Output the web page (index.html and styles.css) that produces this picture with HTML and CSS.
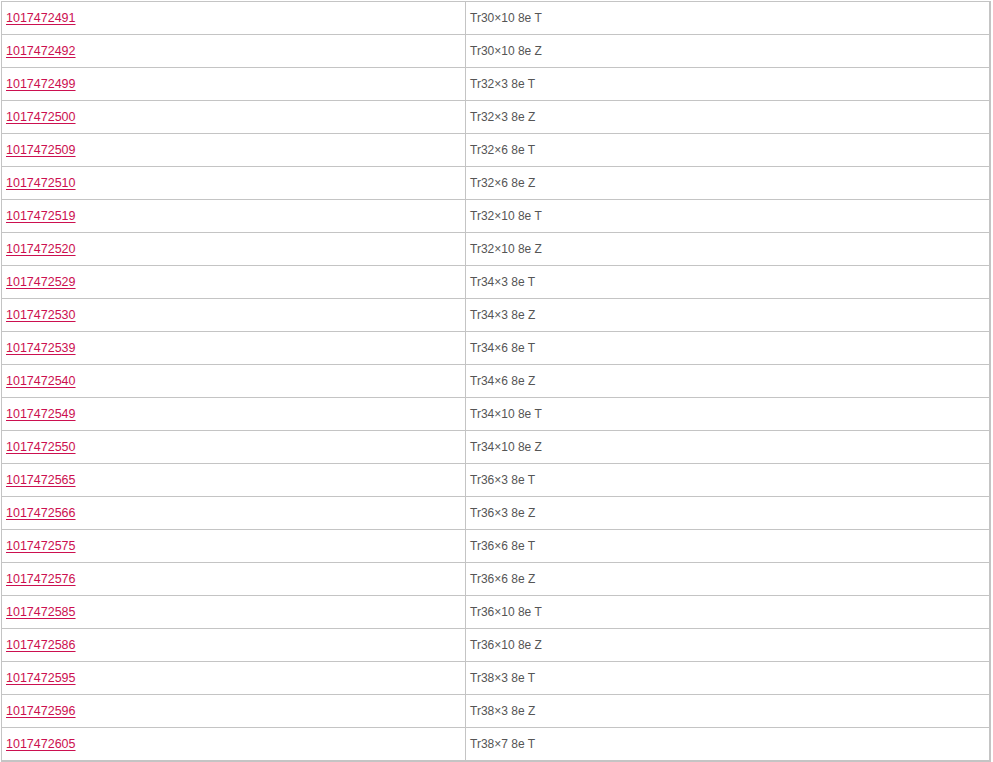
FILE: index.html
```html
<!DOCTYPE html>
<html>
<head>
<meta charset="utf-8">
<link rel="stylesheet" href="styles.css">
</head>
<body>
<div class="wrap">
<table class="parts">
<tbody>
<tr><td class="code"><a href="#">1017472491</a></td><td class="desc">Tr30×10 8e T</td></tr>
<tr><td class="code"><a href="#">1017472492</a></td><td class="desc">Tr30×10 8e Z</td></tr>
<tr><td class="code"><a href="#">1017472499</a></td><td class="desc">Tr32×3 8e T</td></tr>
<tr><td class="code"><a href="#">1017472500</a></td><td class="desc">Tr32×3 8e Z</td></tr>
<tr><td class="code"><a href="#">1017472509</a></td><td class="desc">Tr32×6 8e T</td></tr>
<tr><td class="code"><a href="#">1017472510</a></td><td class="desc">Tr32×6 8e Z</td></tr>
<tr><td class="code"><a href="#">1017472519</a></td><td class="desc">Tr32×10 8e T</td></tr>
<tr><td class="code"><a href="#">1017472520</a></td><td class="desc">Tr32×10 8e Z</td></tr>
<tr><td class="code"><a href="#">1017472529</a></td><td class="desc">Tr34×3 8e T</td></tr>
<tr><td class="code"><a href="#">1017472530</a></td><td class="desc">Tr34×3 8e Z</td></tr>
<tr><td class="code"><a href="#">1017472539</a></td><td class="desc">Tr34×6 8e T</td></tr>
<tr><td class="code"><a href="#">1017472540</a></td><td class="desc">Tr34×6 8e Z</td></tr>
<tr><td class="code"><a href="#">1017472549</a></td><td class="desc">Tr34×10 8e T</td></tr>
<tr><td class="code"><a href="#">1017472550</a></td><td class="desc">Tr34×10 8e Z</td></tr>
<tr><td class="code"><a href="#">1017472565</a></td><td class="desc">Tr36×3 8e T</td></tr>
<tr><td class="code"><a href="#">1017472566</a></td><td class="desc">Tr36×3 8e Z</td></tr>
<tr><td class="code"><a href="#">1017472575</a></td><td class="desc">Tr36×6 8e T</td></tr>
<tr><td class="code"><a href="#">1017472576</a></td><td class="desc">Tr36×6 8e Z</td></tr>
<tr><td class="code"><a href="#">1017472585</a></td><td class="desc">Tr36×10 8e T</td></tr>
<tr><td class="code"><a href="#">1017472586</a></td><td class="desc">Tr36×10 8e Z</td></tr>
<tr><td class="code"><a href="#">1017472595</a></td><td class="desc">Tr38×3 8e T</td></tr>
<tr><td class="code"><a href="#">1017472596</a></td><td class="desc">Tr38×3 8e Z</td></tr>
<tr><td class="code"><a href="#">1017472605</a></td><td class="desc">Tr38×7 8e T</td></tr>
</tbody>
</table>
</div>
</body>
</html>
```
FILE: styles.css
```css
html, body {
  margin: 0;
  padding: 0;
  background: #fff;
}
.wrap {
  padding: 1px 0 0 1px;
  width: 991px;
}
.parts {
  border-collapse: collapse;
  width: 990px;
  font-family: "Liberation Sans", Arial, sans-serif;
  font-size: 12px;
  color: #555;
  border-right: 2px solid #c4c4c4;
}
.parts td {
  border: 1px solid #c4c4c4;
  height: 33px;
  padding: 0 0 0 4px;
  vertical-align: middle;
  box-sizing: border-box;
}
.parts tr:last-child td {
  border-bottom: 2px solid #c4c4c4;
}
.parts .code {
  width: 464px;
}
.parts .desc {
  border-right: 2px solid #c4c4c4;
}
.parts a {
  color: #cc1050;
  font-size: 12.5px;
  text-decoration: underline;
  text-underline-offset: 2px;
}
```
